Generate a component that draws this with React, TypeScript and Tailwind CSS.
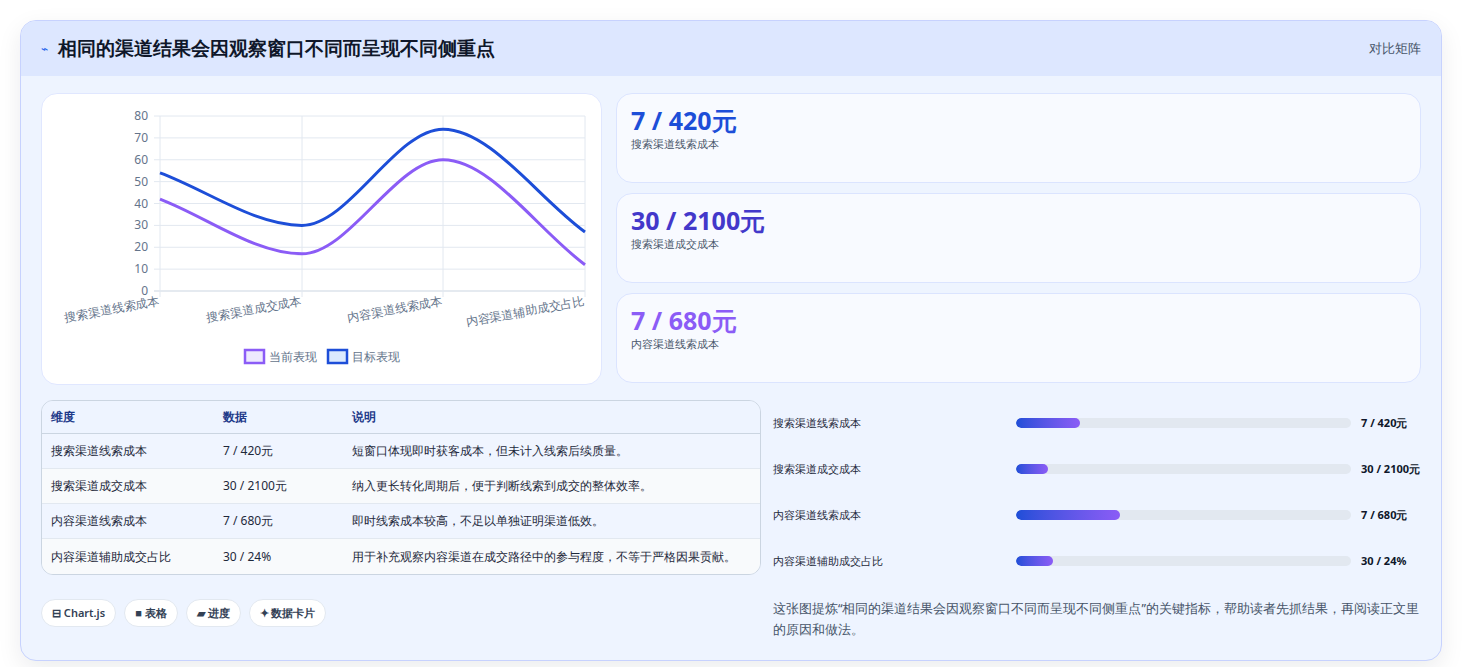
import React from "react";

const X = [158, 300, 441, 583];
const y = (v: number) => 290 - v * 2.1875;
function path(vals: number[]) {
  const pts = vals.map((v, i) => [X[i], y(v)]);
  let d = `M${pts[0][0]},${pts[0][1]}`;
  const t = 0.2;
  for (let i = 0; i < pts.length - 1; i++) {
    const p0 = pts[i - 1] || pts[i];
    const p1 = pts[i];
    const p2 = pts[i + 1];
    const p3 = pts[i + 2] || p2;
    let s1 = (p2[1] - p0[1]) / (p2[0] - p0[0]);
    let s2 = (p3[1] - p1[1]) / (p3[0] - p1[0]);
    if (i > 0 && (p1[1] - p0[1]) * (p2[1] - p1[1]) < 0) s1 = 0;
    if (i < pts.length - 2 && (p2[1] - p1[1]) * (p3[1] - p2[1]) < 0) s2 = 0;
    const dx = (p2[0] - p1[0]) / 3;
    d += ` C${p1[0] + dx},${p1[1] + s1 * dx} ${p2[0] - dx},${p2[1] - s2 * dx} ${p2[0]},${p2[1]}`;
  }
  return d;
}

const labels = ["搜索渠道线索成本", "搜索渠道成交成本", "内容渠道线索成本", "内容渠道辅助成交占比"];

function Chart() {
  return (
    <svg width="560" height="292" viewBox="40 93 560 292" className="block">
      {[0, 10, 20, 30, 40, 50, 60, 70, 80].map((v) => (
        <g key={v}>
          <line x1={152} x2={583} y1={y(v)} y2={y(v)} stroke={v === 0 ? "#cbd5e1" : "#e2e8f0"} />
          <text x={146} y={y(v) + 4} textAnchor="end" fontSize="12" fill="#64748b">{v}</text>
        </g>
      ))}
      {X.map((x) => (
        <line key={x} x1={x} x2={x} y1={115} y2={296} stroke="#e2e8f0" />
      ))}
      {labels.map((l, i) => (
        <text key={l} x={X[i]} y={304} textAnchor="end" fontSize="12" fill="#64748b" transform={`rotate(-10 ${X[i]} 304)`}>{l}</text>
      ))}
      <path d={path([54, 30, 74, 27])} fill="none" stroke="#1d4ed8" strokeWidth="3" />
      <path d={path([42, 17, 60, 12])} fill="none" stroke="#8b5cf6" strokeWidth="3" />
      <rect x={243} y={349} width={19} height={13} fill="#ede9fe" stroke="#8b5cf6" strokeWidth="2.5" />
      <text x={267} y={360} fontSize="12" fill="#64748b">当前表现</text>
      <rect x={326} y={349} width={19} height={13} fill="#dbeafe" stroke="#1d4ed8" strokeWidth="2.5" />
      <text x={350} y={360} fontSize="12" fill="#64748b">目标表现</text>
    </svg>
  );
}

const kpis = [
  { v: "7 / 420元", l: "搜索渠道线索成本", c: "text-[#1d4ed8]" },
  { v: "30 / 2100元", l: "搜索渠道成交成本", c: "text-[#4338ca]" },
  { v: "7 / 680元", l: "内容渠道线索成本", c: "text-[#8b5cf6]" },
];
const rows = [
  ["搜索渠道线索成本", "7 / 420元", "短窗口体现即时获客成本，但未计入线索后续质量。"],
  ["搜索渠道成交成本", "30 / 2100元", "纳入更长转化周期后，便于判断线索到成交的整体效率。"],
  ["内容渠道线索成本", "7 / 680元", "即时线索成本较高，不足以单独证明渠道低效。"],
  ["内容渠道辅助成交占比", "30 / 24%", "用于补充观察内容渠道在成交路径中的参与程度，不等于严格因果贡献。"],
];
const bars = [
  ["搜索渠道线索成本", 19, "7 / 420元"],
  ["搜索渠道成交成本", 9.5, "30 / 2100元"],
  ["内容渠道线索成本", 31, "7 / 680元"],
  ["内容渠道辅助成交占比", 11, "30 / 24%"],
] as const;

export default function App() {
  return (
    <div className="min-h-[667px] bg-white p-5 font-['Noto_Sans','Noto_Sans_CJK_SC',sans-serif]">
      <div className="rounded-2xl border border-[#c7d2fe] bg-[#eef4ff] overflow-hidden shadow-[0_8px_24px_rgba(15,23,42,0.08)]">
        <div className="h-[55px] bg-[#dde7ff] flex items-center justify-between px-5">
          <div className="flex items-center gap-2.5">
            <span className="text-[#2563eb] text-xs">⌁</span>
            <h1 className="text-[19px] font-bold text-[#0f172a]">相同的渠道结果会因观察窗口不同而呈现不同侧重点</h1>
          </div>
          <span className="text-[13px] text-[#475569]">对比矩阵</span>
        </div>
        <div className="p-5 pt-[17px]">
          <div className="flex gap-3.5">
            <div className="w-[561px] h-[292px] bg-white rounded-2xl border border-[#e0e7ff] overflow-hidden shrink-0">
              <Chart />
            </div>
            <div className="flex-1 flex flex-col gap-[10px]">
              {kpis.map((k) => (
                <div key={k.l} className="h-[90px] bg-[#f8faff] rounded-2xl border border-[#dbe4ff] px-[14px] pt-[10px]">
                  <div className={`text-[25px] font-bold leading-[32px] ${k.c}`}>{k.v}</div>
                  <div className="text-[11px] text-[#475569]">{k.l}</div>
                </div>
              ))}
            </div>
          </div>
          <div className="flex gap-3 mt-[15px]">
            <div className="w-[720px] shrink-0">
              <div className="rounded-xl border border-[#cbd5e1] overflow-hidden text-[12px]">
                <div className="grid grid-cols-[172px_129px_1fr] bg-[#eef4ff] h-[33px] items-center px-[9px] text-[#1e3a8a] font-semibold border-b border-[#cbd5e1]">
                  <span>维度</span><span>数据</span><span>说明</span>
                </div>
                {rows.map((r, i) => (
                  <div key={r[0]} className={`grid grid-cols-[172px_129px_1fr] h-[35px] items-center px-[9px] text-[#1e293b] ${i % 2 ? "bg-[#f8fafc]" : "bg-[#f0f5ff]"} ${i < 3 ? "border-b border-[#e2e8f0]" : ""}`}>
                    <span>{r[0]}</span><span>{r[1]}</span><span>{r[2]}</span>
                  </div>
                ))}
              </div>
              <div className="flex gap-2 mt-6">
                {["⊟ Chart.js", "■ 表格", "▰ 进度", "✦ 数据卡片"].map((t) => (
                  <span key={t} className="h-7 px-2.5 rounded-full bg-white border border-[#e2e8f0] text-[11px] font-semibold text-[#334155] flex items-center">{t}</span>
                ))}
              </div>
            </div>
            <div className="flex-1">
              {bars.map(([l, w, v]) => (
                <div key={l} className="h-[46px] flex items-center text-[11px] text-[#1e293b] font-medium">
                  <span className="w-[243px]">{l}</span>
                  <div className="w-[335px] h-[10px] rounded-full bg-[#e2e8f0] overflow-hidden">
                    <div className="h-full rounded-full bg-gradient-to-r from-[#1d4ed8] to-[#8b5cf6]" style={{ width: `${w}%` }} />
                  </div>
                  <span className="ml-2.5 font-bold text-[#0f172a]">{v}</span>
                </div>
              ))}
              <p className="mt-[14px] text-[12.5px] leading-[21px] text-[#475569]">这张图提炼“相同的渠道结果会因观察窗口不同而呈现不同侧重点”的关键指标，帮助读者先抓结果，再阅读正文里的原因和做法。</p>
            </div>
          </div>
        </div>
      </div>
    </div>
  );
}
